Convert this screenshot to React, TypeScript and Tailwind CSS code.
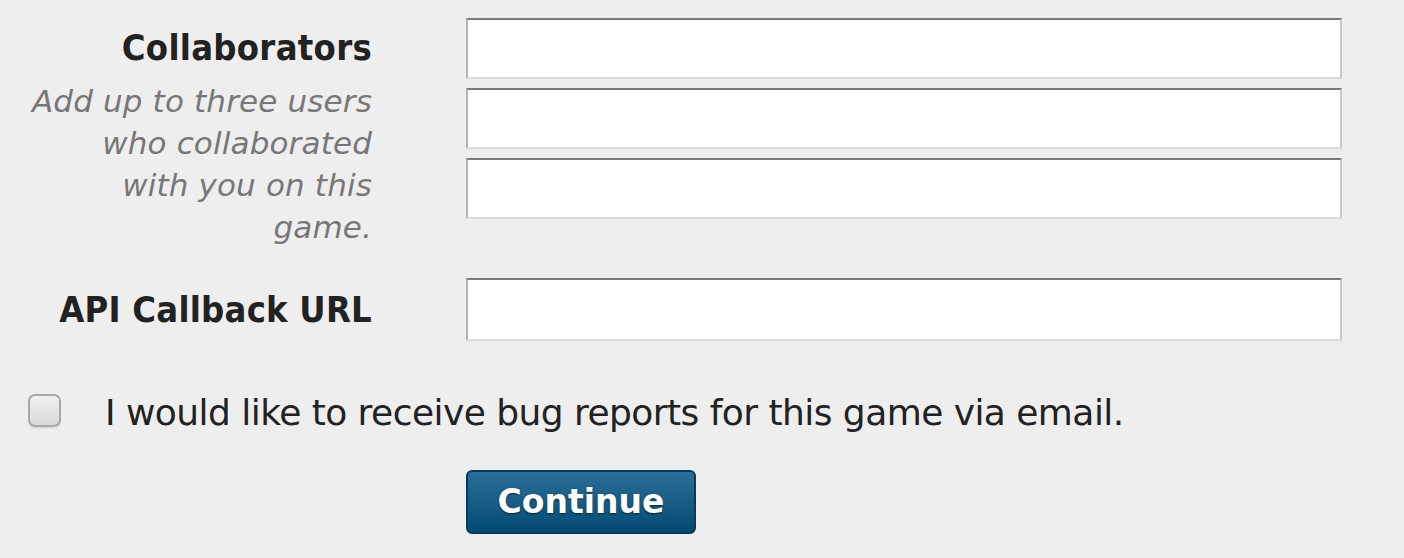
import React from "react";

const inputCls =
  "block w-[876px] h-[61px] bg-white border-2 border-t-[#7a7a7a] border-l-[#b4b4b4] border-r-[#c8c8c8] border-b-[#dcdcdc] outline-none";

const boldLabel = {
  fontFamily: '"DejaVu Sans Condensed", "DejaVu Sans", Verdana, sans-serif',
};

export default function App() {
  return (
    <div
      className="min-h-screen w-full bg-[#eeeeee] text-[#222222]"
      style={{ fontFamily: '"DejaVu Sans", Verdana, sans-serif' }}
    >
      <div className="pt-[18px]">
        <div className="flex gap-[94px]">
          <div className="w-[372px] text-right">
            <div className="text-[36px] font-bold leading-[60px] h-[60px] tracking-[0.3px]" style={boldLabel}>
              Collaborators
            </div>
            <div className="mt-[2px] text-[31px] italic text-[#777777] leading-[42px] tracking-[0.15px]">
              <span className="block">Add up to three users</span>
              <span className="block">who collaborated</span>
              <span className="block">with you on this</span>
              <span className="block">game.</span>
            </div>
          </div>
          <div className="flex flex-col gap-[9px]">
            <input className={inputCls} type="text" />
            <input className={inputCls} type="text" />
            <input className={inputCls} type="text" />
          </div>
        </div>
        <div className="flex gap-[94px] mt-[30px] items-center">
          <div className="w-[372px] text-right text-[36px] font-bold leading-[40px] tracking-[0.25px]" style={boldLabel}>
            API Callback URL
          </div>
          <input className={inputCls + " h-[63px]"} type="text" />
        </div>
        <div className="flex items-start mt-[50px] pl-[28px]">
          <div className="mt-[3px] w-[33px] h-[33px] rounded-[7px] border-2 border-[#a8a8a8] bg-gradient-to-b from-[#f0f0f0] to-[#dadada] shadow-[0_2px_0_rgba(0,0,0,0.06)]" />
          <span className="ml-[44px] text-[36px] leading-[44px] tracking-[-0.55px]">
            I would like to receive bug reports for this game via email.
          </span>
        </div>
        <div className="pl-[466px] mt-[35px]">
          <button className="w-[230px] h-[64px] rounded-[6px] border-2 border-[#073a5c] bg-gradient-to-b from-[#2a6f97] to-[#024a72] text-white text-[33px] font-bold [text-shadow:0_1px_2px_rgba(0,0,0,0.6)]">
            Continue
          </button>
        </div>
      </div>
    </div>
  );
}
